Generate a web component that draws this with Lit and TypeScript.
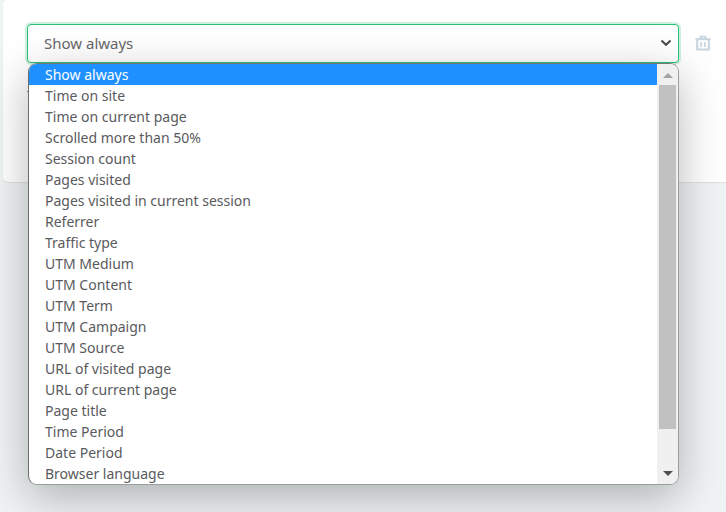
import { LitElement, html, css } from "lit";
import { customElement, state } from "lit/decorators.js";
import { classMap } from "lit/directives/class-map.js";

const CONDITIONS = [
  "Show always",
  "Time on site",
  "Time on current page",
  "Scrolled more than 50%",
  "Session count",
  "Pages visited",
  "Pages visited in current session",
  "Referrer",
  "Traffic type",
  "UTM Medium",
  "UTM Content",
  "UTM Term",
  "UTM Campaign",
  "UTM Source",
  "URL of visited page",
  "URL of current page",
  "Page title",
  "Time Period",
  "Date Period",
  "Browser language",
];

@customElement("app-root")
export class AppRoot extends LitElement {
  @state() private selected = CONDITIONS[0];

  static styles = css`
    :host {
      display: block;
      min-height: 100vh;
      box-sizing: border-box;
      padding-left: 3px;
      overflow: hidden;
      background: #eff3f4;
      color: #595a5d;
      font-family: "Noto Sans", "Open Sans", sans-serif;
      font-size: 14px;
    }
    .panel {
      box-sizing: border-box;
      min-height: 182px;
      padding: 24px 15px 24px 24px;
      background: #fff;
      border-radius: 5px 0 0 5px;
      box-shadow: 0 1px 1px #dde2e4;
    }
    .row {
      display: flex;
      align-items: center;
      gap: 16px;
    }
    .field {
      position: relative;
      flex: 1;
      display: grid;
      align-items: center;
    }
    .field > * {
      grid-area: 1 / 1;
    }
    select {
      appearance: none;
      width: 100%;
      height: 39px;
      margin: 0;
      padding: 0 32px 2px 16px;
      border: 1px solid #28c076;
      border-radius: 4px;
      outline: none;
      background: #fff;
      box-shadow: 0 0 0 2px #d0f0df;
      color: #666769;
      font: inherit;
      font-size: 15px;
    }
    .chevron {
      justify-self: end;
      margin-right: 7px;
      pointer-events: none;
    }
    .remove {
      display: flex;
      padding: 0 0 2px;
      border: 0;
      background: none;
      cursor: pointer;
    }
    .divider {
      width: 8px;
      height: 1px;
      margin: 28px 0 0;
      border: 0;
      background: #6d918a;
    }
    .popup {
      position: absolute;
      z-index: 1;
      top: 100%;
      left: 1px;
      right: 0;
      display: flex;
      box-sizing: border-box;
      border: 1px solid #9c9e9e;
      border-left-color: #6c6c6c;
      border-top-color: #777;
      border-radius: 9px;
      overflow: hidden;
      background: #fff;
      box-shadow: 0 12px 44px rgba(0, 0, 0, 0.28);
    }
    .options {
      flex: 1;
      margin: 0;
      padding: 0;
      list-style: none;
    }
    .option {
      height: 21px;
      padding-left: 16px;
      line-height: 21px;
      cursor: default;
    }
    .active {
      background: #1e90ff;
      color: #fff;
    }
    .scrollbar {
      display: flex;
      flex-direction: column;
      align-items: center;
      width: 21px;
      background: #f0f0f0;
    }
    .arrow {
      flex: none;
      display: block;
    }
    .track {
      flex: 1;
      align-self: stretch;
      padding: 0 2px;
    }
    .thumb {
      height: 91%;
      background: #c1c1c1;
    }
  `;

  private pick(value: string) {
    this.selected = value;
  }

  render() {
    return html`
      <main class="panel">
        <div class="row">
          <div class="field">
            <select
              aria-label="Display condition"
              @change=${(e: Event) => this.pick((e.target as HTMLSelectElement).value)}
            >
              ${CONDITIONS.map(
                (c) => html`<option .selected=${c === this.selected}>${c}</option>`
              )}
            </select>
            <svg class="chevron" width="12" height="9" viewBox="0 0 12 9" aria-hidden="true">
              <path d="M1.5 1.5 6 5.8l4.5-4.3" fill="none" stroke="#4a4a4a" stroke-width="2" />
            </svg>
            <div class="popup">
              <ul class="options" role="listbox" aria-label="Conditions">
                ${CONDITIONS.map(
                  (c) => html`<li
                    role="option"
                    aria-selected=${c === this.selected}
                    class=${classMap({ option: true, active: c === this.selected })}
                    @click=${() => this.pick(c)}
                  >${c}</li>`
                )}
              </ul>
              <div class="scrollbar" aria-hidden="true">
                <svg class="arrow" width="21" height="21" viewBox="0 0 21 21">
                  <path d="M6 14h10l-5-5z" fill="#a3a3a3" />
                </svg>
                <div class="track"><div class="thumb"></div></div>
                <svg class="arrow" width="21" height="21" viewBox="0 0 21 21">
                  <path d="M6 8h10l-5 5z" fill="#505050" />
                </svg>
              </div>
            </div>
          </div>
          <button class="remove" aria-label="Delete condition">
            <svg width="16" height="16" viewBox="0 0 16 16" fill="none" stroke="#c6d5df">
              <path d="M0.5 4.2h15" stroke-width="2" />
              <path d="M5.5 4V1.6h5V4" stroke-width="1.8" />
              <path d="M2.2 4v10.6h11.6V4" stroke-width="2" />
              <path d="M6.2 7v5M9.8 7v5" stroke-width="1.8" />
            </svg>
          </button>
        </div>
        <hr class="divider" />
      </main>
    `;
  }
}
